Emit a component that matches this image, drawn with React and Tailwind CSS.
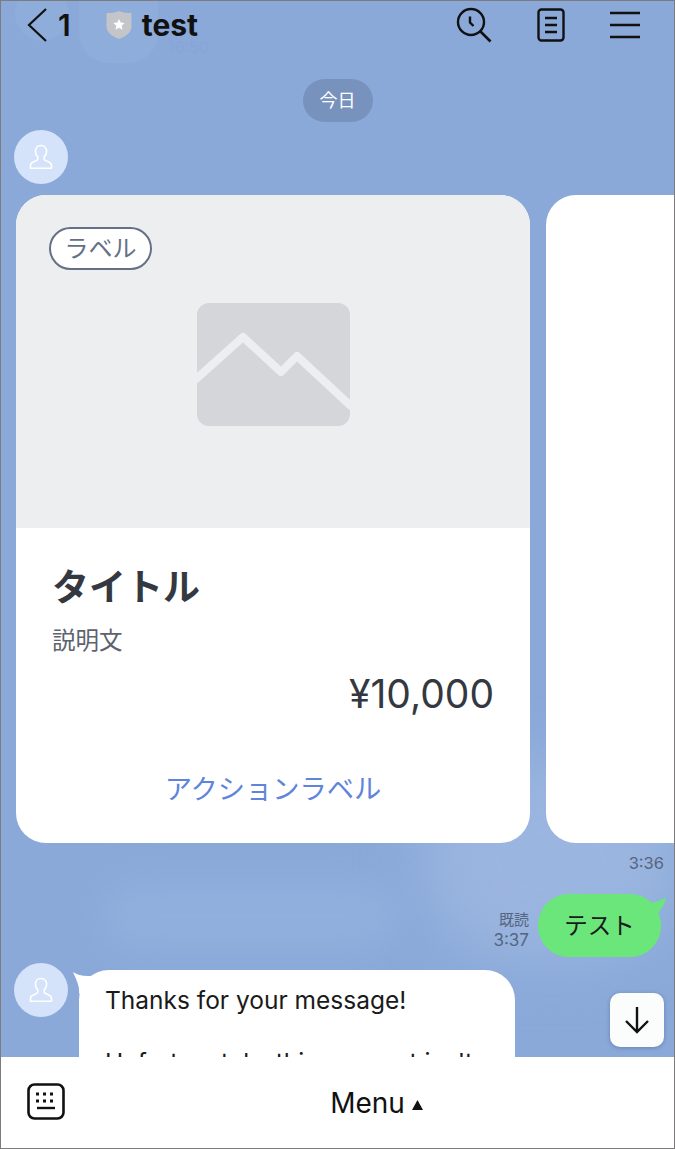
import React from 'react';

const FONT = "font-['Inter','Noto_Sans_CJK_JP',sans-serif]";

const AvatarIcon = () => (
     <div className="w-[54px] h-[54px] shrink-0 rounded-full bg-[#d4e3fa] flex items-center justify-center">
          <svg width="24" height="26" viewBox="0 0 24 26" fill="none" stroke="#fff" strokeWidth="1.6" strokeLinejoin="round">
               <path d="M12 1.500c-3.600 0-5.600 2.600-5.600 5.800 0 2.300.9 4.200 2.400 5.600v1.900c0 .8-.5 1.300-1.200 1.600l-3.800 1.900C2.300 19 1.500 20 1.500 21.300v3h21v-3c0-1.300-.8-2.300-2.300-3l-3.800-1.900c-.7-.3-1.200-.8-1.200-1.600v-1.900c1.500-1.400 2.400-3.300 2.400-5.600 0-3.200-2-5.800-5.600-5.800z" />
          </svg>
     </div>
);

const Header = () => (
     <header className="relative h-[47px] shrink-0">
          {/* previous messages showing through the transparent header */}
          <div className="absolute left-[14px] top-[-14px] w-[54px] h-[54px] rounded-full bg-[#8fadda]" />
          <div className="absolute left-[78px] top-[-24px] w-[79px] h-[86px] rounded-[30px] bg-[#8fadda]" />
          <span className="absolute left-[167px] top-[36px] text-[16px] leading-[20px] text-[#87a5d6]">16:50</span>

          <div className="relative flex items-center h-full">
               <svg className="ml-[26px]" width="20" height="34" viewBox="0 0 20 34" fill="none" stroke="#111" strokeWidth="2.2">
                    <path d="M19 1 2 17l17 16" />
               </svg>
               <span className="ml-[11px] text-[30px] font-semibold leading-none text-[#111]">1</span>
               <svg className="ml-[35px]" width="26" height="28" viewBox="0 0 26 28">
                    <path d="M13 0c4 1.800 8 2 12.500 2v13.500C25.500 21 20 25.500 13 28 6 25.500.5 21 .5 15.500V2C5 2 9 1.800 13 0z" fill="#c3c5c9" />
                    <path d="m13 8 1.700 3.600 3.900.5-2.900 2.700.8 3.900-3.500-2-3.500 2 .8-3.900-2.900-2.700 3.900-.5z" fill="#fff" />
               </svg>
               <span className="ml-[10px] text-[30px] font-bold leading-none text-[#111]">test</span>
               <div className="ml-auto mr-[34px] flex items-center gap-[45px]">
                    <svg width="36" height="36" viewBox="0 0 36 36" fill="none" stroke="#111" strokeWidth="2.400">
                         <circle cx="15" cy="15" r="13" />
                         <path d="m24.500 24.500 10 10" strokeWidth="2.600" />
                         <path d="M14 9.500v6l3.500 3.500" strokeWidth="2.400" />
                    </svg>
                    <svg width="28" height="34" viewBox="0 0 28 34" fill="none" stroke="#111" strokeWidth="2.400">
                         <rect x="1.500" y="1.500" width="25" height="31" rx="3" />
                         <path d="M8 10h12M8 17h12M8 24h12" strokeWidth="2.600" />
                    </svg>
                    <svg width="30" height="28" viewBox="0 0 30 28" fill="none" stroke="#111" strokeWidth="2.400">
                         <path d="M0 2h30M0 14h30M0 26h30" />
                    </svg>
               </div>
          </div>
     </header>
);

const ImagePlaceholder = () => (
     <svg width="153" height="123" viewBox="0 0 153 123">
          <rect width="153" height="123" rx="12" fill="#d4d6da" />
          <path d="M-2 77 46 34l38 35 16-16 55 51" fill="none" stroke="#edeef0" strokeWidth="8" strokeLinejoin="round" />
     </svg>
);

const ProductCard = () => (
     <div className="w-[514px] h-[648px] shrink-0 rounded-[30px] overflow-hidden bg-white flex flex-col">
          <div className="h-[333px] shrink-0 bg-[#edeef0] relative flex items-start justify-center pt-[108px]">
               <span className="absolute left-[33px] top-[32px] h-[43px] w-[103px] rounded-full bg-white border-2 border-[#667085] flex items-center justify-center text-[24px] text-[#667085]">
                    ラベル
               </span>
               <ImagePlaceholder />
          </div>
          <div className="px-[36px] flex flex-col flex-1">
               <h2 className="mt-[35px] text-[37px] leading-[50px] font-bold text-[#343840]">タイトル</h2>
               <p className="mt-[12px] text-[23.5px] leading-[32px] text-[#5d626c]">説明文</p>
               <p className="mt-[12px] text-right text-[39px] leading-[50px] text-[#343840]">¥10,000</p>
               <p className="mt-[51px] text-center text-[27.25px] leading-[40px] text-[#5f85da]">アクションラベル</p>
          </div>
     </div>
);

const App = () => (
     <div className={`relative w-[675px] h-[1149px] overflow-hidden border border-[#7d7b7b] bg-[#8aa9d9] flex flex-col ${FONT}`}>
          {/* wallpaper clouds */}
          <div className="absolute left-[420px] top-[760px] w-[260px] h-[200px] rounded-full bg-[#9ab5df] blur-[30px]" />
          <div className="absolute left-[100px] top-[880px] w-[300px] h-[70px] rounded-full bg-[#91afdc] blur-[16px]" />

          <Header />

          <main className="relative flex-1 min-h-0 overflow-hidden flex flex-col">
               <div className="mt-[31px] shrink-0 self-center h-[43px] w-[70px] rounded-full bg-[#7792bd] flex items-center justify-center text-[18px] text-white">
                    今日
               </div>
               <div className="mt-[8px] ml-[13px] shrink-0">
                    <AvatarIcon />
               </div>
               <div className="mt-[11px] ml-[15px] flex gap-[16px] shrink-0">
                    <ProductCard />
                    <div className="w-[514px] h-[648px] shrink-0 rounded-[30px] bg-white" />
               </div>
               <p className="mt-[10px] mr-[10px] shrink-0 text-right text-[16.5px] leading-[20px] text-[#56657f]">3:36</p>

               <div className="mt-[21px] mr-[13px] flex justify-end items-center gap-[9px] shrink-0">
                    <div className="pt-[8px] text-right text-[15px] leading-[20px] text-[#56657f]">
                         <p>既読</p>
                         <p className="text-[17px]">3:37</p>
                    </div>
                    <div className="relative w-[123px] h-[63px] rounded-[31px] bg-[#6ae67b] flex items-center justify-center text-[23.5px] text-[#1a1a1a]">
                         テスト
                         <svg className="absolute right-[-5px] top-[2px]" width="22" height="20" viewBox="0 0 22 20">
                              <path d="M0 6c7 2 15 0 22-5-1 6-4 12-9 17z" fill="#6ae67b" />
                         </svg>
                    </div>
               </div>

               <div className="mt-[6px] ml-[13px] flex gap-[11px] shrink-0">
                    <AvatarIcon />
                    <div className="relative mt-[7px] w-[436px] h-[200px] rounded-[30px] bg-white px-[26px] pt-[15px] text-[24.5px] leading-[31px] text-[#1a1a1a]">
                         <svg className="absolute left-[-6px] top-[2px]" width="26" height="22" viewBox="0 0 26 22">
                              <path d="M0 0c6 4 13 5 26 3L6 22C7 14 3 7 0 0z" fill="#fff" />
                         </svg>
                         <p className="relative whitespace-nowrap">Thanks for your message!</p>
                         <p className="h-[31px]" />
                         <p className="whitespace-nowrap">Unfortunately, this account isn't</p>
                    </div>
               </div>

               <button className="absolute right-[10px] bottom-[10px] w-[54px] h-[54px] rounded-[10px] bg-[#fbfcfc] shadow-[0_1px_4px_rgba(40,60,100,0.35)] flex items-center justify-center">
                    <svg width="26" height="28" viewBox="0 0 26 28" fill="none" stroke="#111" strokeWidth="2.400">
                         <path d="M13 1v25M2 15l11 11 11-11" />
                    </svg>
               </button>
          </main>

          <footer className="relative h-[91px] shrink-0 bg-white flex items-center justify-center">
               <svg className="absolute left-[26px] top-[26px]" width="38" height="37" viewBox="0 0 38 37" fill="none" stroke="#111">
                    <rect x="1.500" y="1.500" width="35" height="34" rx="6" strokeWidth="2.600" />
                    <path d="M9 11h3M16 11h3M23 11h3M9 18h3M16 18h3M23 18h3" strokeWidth="2.800" />
                    <path d="M10 25h18" strokeWidth="2.400" />
               </svg>
               <span className="ml-[78px] text-[28px] text-[#111] leading-none">Menu</span>
               <svg className="ml-[7px] mt-[4px]" width="11" height="10" viewBox="0 0 11 10">
                    <path d="M5.500 0 11 10H0z" fill="#111" />
               </svg>
          </footer>
     </div>
);

export default App;
